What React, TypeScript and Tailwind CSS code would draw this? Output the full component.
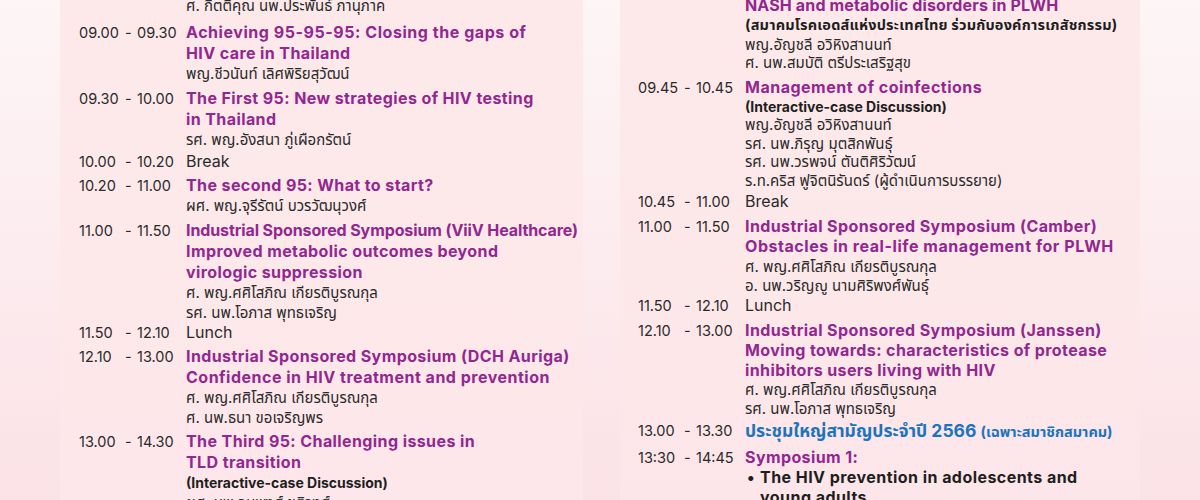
import React from "react";

const FONT = { fontFamily: "Inter, 'Noto Sans Thai', 'Noto Sans', sans-serif" };

type RowProps = {
  start?: string;
  end?: string;
  className?: string;
  children?: React.ReactNode;
};

function Row({ start, end, className, children }: RowProps) {
  return (
    <div className={"grid grid-cols-[46px_12px_49px_1fr] " + (className ?? "")}>
      <div className="text-[14.5px] leading-[21px] text-[#2a2a2a]">{start}</div>
      <div className="text-[14.5px] leading-[21px] text-[#2a2a2a]">{start ? "-" : ""}</div>
      <div className="text-[14.5px] leading-[21px] text-[#2a2a2a]">{end}</div>
      <div className="flex flex-col">{children}</div>
    </div>
  );
}

type TP = { children: React.ReactNode; className?: string };

/* Left card text pieces */
function T({ children, className }: TP) {
  return (
    <div
      className={
        "whitespace-nowrap text-[16px] font-bold leading-[21px] text-[#92278f] " +
        (className ?? "tracking-[0.4px]")
      }
    >
      {children}
    </div>
  );
}
function S({ children }: TP) {
  return <div className="whitespace-nowrap text-[15px] leading-[19.5px] text-[#2a2a2a]">{children}</div>;
}
function N({ children }: TP) {
  return (
    <div className="whitespace-nowrap text-[14px] font-bold leading-[19.5px] text-[#1e1e1e]">{children}</div>
  );
}
function P({ children }: TP) {
  return <div className="whitespace-nowrap text-[16px] leading-[21px] text-[#2a2a2a]">{children}</div>;
}

/* Right card text pieces (slightly tighter) */
function T2({ children, className }: TP) {
  return (
    <div
      className={
        "whitespace-nowrap text-[16px] font-bold leading-[20px] text-[#92278f] " +
        (className ?? "tracking-[0.4px]")
      }
    >
      {children}
    </div>
  );
}
function S2({ children }: TP) {
  return <div className="whitespace-nowrap text-[15px] leading-[18.5px] text-[#2a2a2a]">{children}</div>;
}
function N2({ children, className }: TP) {
  return (
    <div
      className={
        "whitespace-nowrap font-bold leading-[19.5px] text-[#1e1e1e] " + (className ?? "text-[14px]")
      }
    >
      {children}
    </div>
  );
}

export default function App() {
  return (
    <div
      style={FONT}
      className="flex h-[500px] w-[1200px] overflow-hidden bg-gradient-to-b from-[#fdf5f6] via-[#fcecef] to-[#fbe2e7] pl-[60px]"
    >
      {/* Left card */}
      <div className="h-full w-[523px] shrink-0 bg-gradient-to-b from-[#fde9ea] to-[#fde7ea] pl-[19px]">
        <div className="-mt-[4px] flex flex-col">
          <Row>
            <S>ศ. กิตติคุณ นพ.ประพันธ์ ภานุภาค</S>
          </Row>
          <Row start="09.00" end="09.30" className="mt-[6px]">
            <T className="tracking-[0.55px]">Achieving 95-95-95: Closing the gaps of</T>
            <T>HIV care in Thailand</T>
            <S>พญ.ชีวนันท์ เลิศพิริยสุวัฒน์</S>
          </Row>
          <Row start="09.30" end="10.00" className="mt-[5px]">
            <T>The First 95: New strategies of HIV testing</T>
            <T>in Thailand</T>
            <S>รศ. พญ.อังสนา ภู่เผือกรัตน์</S>
          </Row>
          <Row start="10.00" end="10.20" className="mt-[1px]">
            <P>Break</P>
          </Row>
          <Row start="10.20" end="11.00" className="mt-[3px]">
            <T>The second 95: What to start?</T>
            <S>ผศ. พญ.จุรีรัตน์ บวรวัฒนุวงศ์</S>
          </Row>
          <Row start="11.00" end="11.50" className="mt-[5px]">
            <T className="tracking-[-0.1px]">Industrial Sponsored Symposium (ViiV Healthcare)</T>
            <T>Improved metabolic outcomes beyond</T>
            <T>virologic suppression</T>
            <S>ศ. พญ.ศศิโสภิณ เกียรติบูรณกุล</S>
            <S>รศ. นพ.โอภาส พุทธเจริญ</S>
          </Row>
          <Row start="11.50" end="12.10">
            <P>Lunch</P>
          </Row>
          <Row start="12.10" end="13.00" className="mt-[3px]">
            <T>Industrial Sponsored Symposium (DCH Auriga)</T>
            <T className="tracking-[0.5px]">Confidence in HIV treatment and prevention</T>
            <S>ศ. พญ.ศศิโสภิณ เกียรติบูรณกุล</S>
            <S>ศ. นพ.ธนา ขอเจริญพร</S>
          </Row>
          <Row start="13.00" end="14.30" className="mt-[4px]">
            <T>The Third 95: Challenging issues in</T>
            <T>TLD transition</T>
            <N>(Interactive-case Discussion)</N>
            <S>ผศ. นพ.อนุพงศ์ ชุติวงศ์</S>
          </Row>
        </div>
      </div>

      <div className="w-[37px] shrink-0" />

      {/* Right card */}
      <div className="h-full w-[520px] shrink-0 bg-gradient-to-b from-[#fde9ea] to-[#fce6e9] pl-[18px]">
        <div className="-mt-[5px] flex flex-col">
          <Row>
            <T2 className="tracking-[0.15px]">NASH and metabolic disorders in PLWH</T2>
            <N2 className="text-[14.5px] tracking-[0.2px]">
              (สมาคมโรคเอดส์แห่งประเทศไทย ร่วมกับองค์การเภสัชกรรม)
            </N2>
            <div className="mt-[1px]">
              <S2>พญ.อัญชลี อวิหิงสานนท์</S2>
              <S2>ศ. นพ.สมบัติ ตรีประเสริฐสุข</S2>
            </div>
          </Row>
          <Row start="09.45" end="10.45" className="mt-[4px]">
            <T2 className="tracking-[0.5px]">Management of coinfections</T2>
            <N2>(Interactive-case Discussion)</N2>
            <S2>พญ.อัญชลี อวิหิงสานนท์</S2>
            <S2>รศ. นพ.ภิรุญ มุตสิกพันธุ์</S2>
            <S2>รศ. นพ.วรพจน์ ตันติศิริวัฒน์</S2>
            <S2>ร.ท.คริส ฟูจิตนิรันดร์ (ผู้ดำเนินการบรรยาย)</S2>
          </Row>
          <Row start="10.45" end="11.00" className="mt-[1px]">
            <P>Break</P>
          </Row>
          <Row start="11.00" end="11.50" className="mt-[4px]">
            <T2>Industrial Sponsored Symposium (Camber)</T2>
            <T2 className="tracking-[0.55px]">Obstacles in real-life management for PLWH</T2>
            <div className="mt-[2px]">
              <S2>ศ. พญ.ศศิโสภิณ เกียรติบูรณกุล</S2>
              <S2>อ. นพ.วริญญู นามศิริพงศ์พันธุ์</S2>
            </div>
          </Row>
          <Row start="11.50" end="12.10">
            <P>Lunch</P>
          </Row>
          <Row start="12.10" end="13.00" className="mt-[4px]">
            <T2>Industrial Sponsored Symposium (Janssen)</T2>
            <T2>Moving towards: characteristics of protease</T2>
            <T2>inhibitors users living with HIV</T2>
            <div className="mt-[1px]">
              <S2>ศ. พญ.ศศิโสภิณ เกียรติบูรณกุล</S2>
              <S2>รศ. นพ.โอภาส พุทธเจริญ</S2>
            </div>
          </Row>
          <Row start="13.00" end="13.30" className="mt-[2px]">
            <div className="whitespace-nowrap text-[17.5px] font-bold leading-[21px] text-[#1b75bc]">
              ประชุมใหญ่สามัญประจำปี 2566{" "}
              <span className="text-[14.5px]">(เฉพาะสมาชิกสมาคม)</span>
            </div>
          </Row>
          <Row start="13:30" end="14:45" className="mt-[5px]">
            <T2>Symposium 1:</T2>
            <div className="flex whitespace-nowrap text-[16px] font-bold leading-[20px] tracking-[0.45px] text-[#1e1e1e]">
              <span className="w-[15px] pl-[2px]">•</span>
              <div className="flex flex-col">
                <span>The HIV prevention in adolescents and</span>
                <span>young adults</span>
              </div>
            </div>
          </Row>
        </div>
      </div>
    </div>
  );
}
